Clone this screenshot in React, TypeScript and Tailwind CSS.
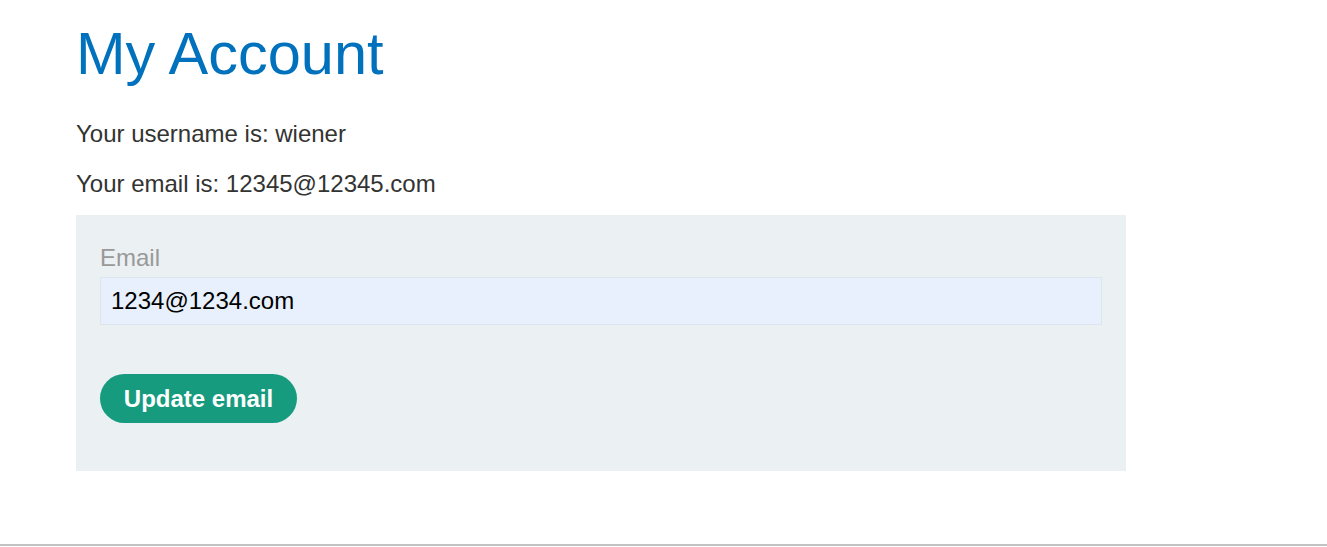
import React, { useState } from 'react';

const App: React.FC = () => {
  const [email, setEmail] = useState('1234@1234.com');

  return (
    <div className="min-h-screen h-[547px] flex flex-col bg-white font-['Liberation_Sans',Arial,sans-serif] text-[#333332]">
      <main className="flex-1 pl-[76px]">
        <h1 className="mt-[24px] text-[59.5px] leading-[60px] text-[#0071bc]">My Account</h1>
        <div className="mt-[37px] flex flex-col gap-[24px] text-[24px] leading-[26px]">
          <p>Your username is: wiener</p>
          <p>Your email is: 12345@12345.com</p>
        </div>
        <form
          className="mt-[18px] w-[1050px] bg-[#ebf0f2] px-[24px] pt-[30px] pb-[48px]"
          onSubmit={(e) => e.preventDefault()}
        >
          <label className="block text-[24px] leading-[26px] text-[#999999]">Email</label>
          <input
            type="email"
            value={email}
            onChange={(e) => setEmail(e.target.value)}
            className="mt-[6px] block h-[48px] w-full border border-[#dfe5ee] bg-[#e8f0fe] px-[10px] text-[24px] text-black outline-none"
          />
          <button
            type="submit"
            className="mt-[49px] h-[49px] w-[197px] rounded-full bg-[#169b7e] text-[24px] font-bold text-white"
          >
            Update email
          </button>
        </form>
      </main>
      <div className="h-[3px] border-t-2 border-[#c2c2c2]" />
    </div>
  );
};

export default App;
